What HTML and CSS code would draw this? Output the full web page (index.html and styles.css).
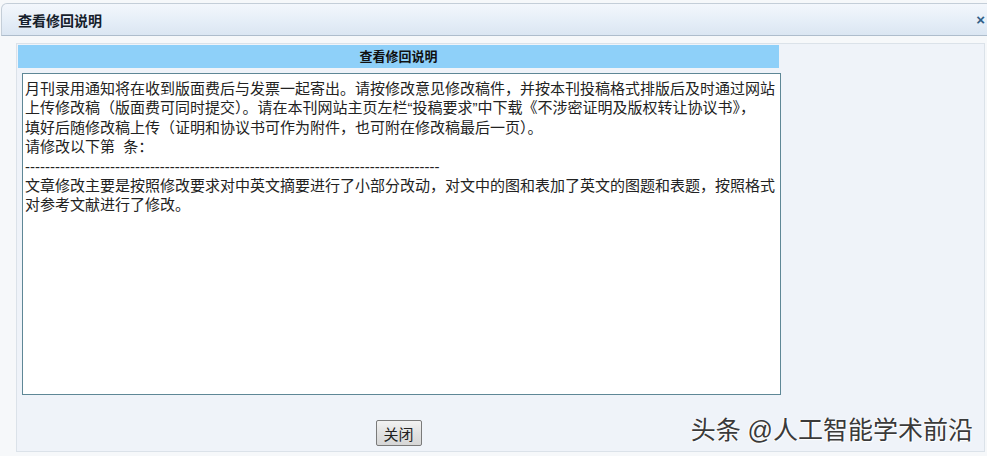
FILE: index.html
```html
<!DOCTYPE html>
<html lang="zh-CN">
  <head>
    <meta charset="UTF-8" />
    <meta name="viewport" content="width=device-width, initial-scale=1.0" />
    <title>查看修回说明</title>
    <link rel="stylesheet" href="styles.css">
  </head>
  <body>
    <main class="page">
      <header class="dialog-head">
        <h1>查看修回说明</h1>
        <span class="close">×</span>
      </header>
      <section class="dialog-body">
        <div class="inner">
          <div class="caption">查看修回说明</div>
          <textarea class="memo" readonly wrap="off">月刊录用通知将在收到版面费后与发票一起寄出。请按修改意见修改稿件，并按本刊投稿格式排版后及时通过网站
上传修改稿（版面费可同时提交）。请在本刊网站主页左栏“投稿要求”中下载《不涉密证明及版权转让协议书》，
填好后随修改稿上传（证明和协议书可作为附件，也可附在修改稿最后一页）。
请修改以下第  条：
-----------------------------------------------------------------------------------
文章修改主要是按照修改要求对中英文摘要进行了小部分改动，对文中的图和表加了英文的图题和表题，按照格式
对参考文献进行了修改。</textarea>
          <div class="controls">
            <button id="close">关闭</button>
          </div>
        </div>
      </section>
      <div class="watermark">头条 @人工智能学术前沿</div>
    </main>
  </body>
</html>
```

FILE: styles.css
```css
* {
  padding: 0;
  margin: 0;
  box-sizing: border-box;
  font-family: "Liberation Sans", "Noto Sans CJK SC", sans-serif;
}

body {
  background-color: #f6f8fa;
  overflow: hidden;
}

.page {
  position: relative;
  height: 456px;
  padding-top: 3px;
}

.dialog-head {
  display: flex;
  align-items: center;
  justify-content: space-between;
  height: 33px;
  margin-left: 1px;
  margin-right: -2px;
  padding-left: 16px;
  padding-right: 3px;
  border: 1px solid #c4ced8;
  border-bottom-color: #aebdcc;
  border-radius: 6px 0 0 0;
  background: linear-gradient(#f3f7fc, #e4edf7 60%, #dbe6f2);
}

.dialog-head h1 {
  font-size: 14px;
  font-weight: bold;
  color: #15202b;
}

.close {
  font-size: 15px;
  font-weight: bold;
  color: #2f5f88;
}

.dialog-body {
  height: 409px;
  margin: 7px 2px 0 16px;
  padding: 1px;
  border: 1px solid #dbe2e9;
  background-color: #eff3f9;
}

.inner {
  width: 761px;
}

.caption {
  height: 23px;
  line-height: 23px;
  text-align: center;
  font-size: 13px;
  font-weight: bold;
  color: #111;
  background-color: #8ed0f9;
}

.memo {
  display: block;
  width: 759px;
  height: 322px;
  margin: 5px 0 0 4px;
  padding: 5px 2px;
  border: 1px solid #5e8796;
  background-color: #fff;
  color: #222;
  font-size: 15px;
  line-height: 19.4px;
  resize: none;
  overflow: hidden;
  outline: none;
}

.controls {
  display: flex;
  justify-content: center;
  padding-top: 25px;
}

#close {
  width: 46px;
  height: 26px;
  font-size: 15px;
  color: #222;
  border: 1px solid #7a7a7a;
  border-radius: 2px;
  background: linear-gradient(#f2f2f2, #e2e2e2 50%, #d6d6d6);
  cursor: pointer;
}

.watermark {
  position: absolute;
  right: 14px;
  bottom: 10px;
  font-size: 25px;
  color: #3a3a3a;
  text-shadow: 1px 1px 1px #fff, -1px 0 1px #fff;
}
```
